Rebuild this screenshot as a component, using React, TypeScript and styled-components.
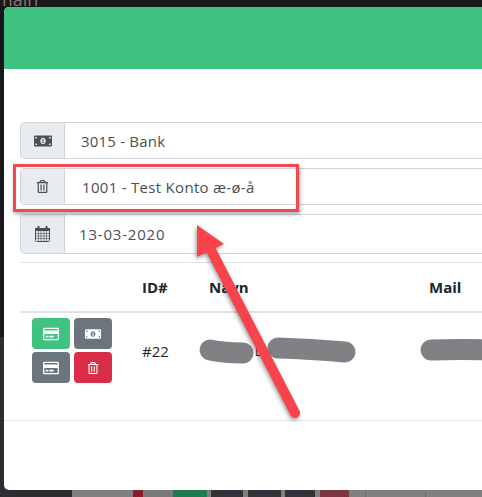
import React, { FC, ReactNode } from "react";
import styled, { createGlobalStyle } from "styled-components";
import { FaMoneyBillAlt, FaRegCreditCard, FaRegTrashAlt } from "react-icons/fa";

const GlobalStyle = createGlobalStyle`
    html, body {
        margin: 0;
        padding: 0;
        background: #17181c;
    }
`;

const Page = styled.div`
    position: relative;
    width: 482px;
    height: 497px;
    overflow: hidden;
    display: flex;
    flex-direction: column;
    font-family: "Open Sans", "Noto Sans", sans-serif;
    background: linear-gradient(#17181c 337px, #2a2e33 337px);
`;

const BackdropTitle = styled.div`
    height: 7px;
    flex: none;
    overflow: hidden;
    font-size: 18px;
    line-height: 18px;
    color: #8f7672;

    span {
        display: block;
        margin: -10px 0 0 -4px;
    }
`;

const Modal = styled.div`
    flex: none;
    width: 700px;
    height: 483px;
    margin-left: 4px;
    background: #fff;
    border-radius: 5px 0 0 5px;
    overflow: hidden;
`;

const ModalHeader = styled.div`
    height: 62px;
    background: #3fc380;
`;

const ModalBody = styled.div`
    height: 351px;
    padding: 53px 0 0 16px;
    box-sizing: border-box;
`;

const ModalFooter = styled.div`
    border-top: 1px solid #e4e7ea;
`;

const InputGroup = styled.div<{ $height: number }>`
    display: flex;
    height: ${p => p.$height}px;
    margin-bottom: 9px;
    margin-right: -1px;
    border: 1px solid #ced4da;
    border-radius: 4px 0 0 4px;
    box-sizing: border-box;
`;

const Addon = styled.div`
    width: 43px;
    flex: none;
    display: flex;
    align-items: center;
    justify-content: center;
    background: #e9ecef;
    border-right: 1px solid #ced4da;
    border-radius: 3px 0 0 3px;
    color: #495057;
`;

const InputText = styled.div<{ $indent: number; $spacing: number }>`
    display: flex;
    align-items: center;
    padding-left: ${p => p.$indent}px;
    font-size: 15px;
    color: #495057;
    letter-spacing: ${p => p.$spacing}px;
`;

const TableHead = styled.div`
    display: grid;
    grid-template-columns: 122px 67px 220px 1fr;
    align-items: center;
    height: 48px;
    margin-top: -1px;
    border-top: 1px solid #dee2e6;
    border-bottom: 2px solid #dee2e6;
    font-size: 15px;
    font-weight: 700;
    color: #212529;
`;

const TableRow = styled.div`
    display: grid;
    grid-template-columns: 122px 67px 220px 1fr;
    align-items: center;
    height: 75px;
    font-size: 15px;
    color: #212529;
`;

const ActionGrid = styled.div`
    display: grid;
    grid-template-columns: 38px 38px;
    grid-auto-rows: 31px;
    gap: 3px 4px;
    margin-left: 12px;
`;

const ActionButton = styled.button<{ $color: string }>`
    display: flex;
    align-items: center;
    justify-content: center;
    padding: 0;
    border: none;
    border-radius: 4px;
    background: ${p => p.$color};
    color: #fff;
`;

const NameCell = styled.div`
    padding: 1px 0 0 46px;
    font-size: 12px;
`;

const BackdropStrip = styled.div`
    flex: none;
    height: 7px;
    display: flex;
`;

const StripSegment = styled.div<{ $width: number; $color: string }>`
    flex: none;
    width: ${p => p.$width}px;
    background: ${p => p.$color};
`;

const Highlight = styled.div`
    position: absolute;
    left: 13px;
    top: 164px;
    width: 286px;
    height: 48px;
    box-sizing: border-box;
    border: 3px solid #ee4a50;
    box-shadow: 1px 2px 4px rgba(0, 0, 0, 0.35), inset 0 0 2px rgba(0, 0, 0, 0.15);
`;

const Annotations = styled.svg`
    position: absolute;
    left: 0;
    top: 0;
    pointer-events: none;
`;

const ArrowGroup = styled.g`
    filter: drop-shadow(-1px 2px 2px rgba(0, 0, 0, 0.4));
`;

const GREEN = "#3fc380";
const GREY = "#6c757d";
const RED = "#d92d48";

const strip: [number, string][] = [
    [72, "transparent"],
    [61, "#808080"],
    [10, "#8a1c2c"],
    [30, "#7a7a7a"],
    [34, "#1e7a50"],
    [4, "#808080"],
    [32, "#2e3439"],
    [5, "#808080"],
    [33, "#2e3439"],
    [4, "#808080"],
    [30, "#2e3439"],
    [5, "#808080"],
    [29, "#7a3540"],
    [16, "#808080"],
    [1, "#6a6a6a"],
    [59, "#808080"],
    [1, "#6a6a6a"],
    [56, "#808080"]
];

const CalendarIcon: FC = () => (
    <svg width={15} height={16} viewBox="0 0 15 16" fill="none" stroke="currentColor">
        <rect x={0.5} y={2.5} width={14} height={13} rx={1} />
        <rect x={0} y={2} width={15} height={3} fill="currentColor" stroke="none" />
        <path d="M3.5 0.5V3.5M11.5 0.5V3.5" strokeWidth={2} strokeLinecap="round" />
        <path d="M3.5 5V15M6 5V15M9 5V15M11.5 5V15M0 7.5H15M0 10H15M0 12.5H15" strokeWidth={0.6} />
    </svg>
);

const Field: FC<{ icon: ReactNode; height: number; indent: number; spacing: number; value: string }> = ({
    icon,
    height,
    indent,
    spacing,
    value
}) => (
    <InputGroup $height={height}>
        <Addon>{icon}</Addon>
        <InputText $indent={indent} $spacing={spacing}>
            {value}
        </InputText>
    </InputGroup>
);

export default function App() {
    return (
        <Page>
            <GlobalStyle />
            <BackdropTitle>
                <span>main</span>
            </BackdropTitle>
            <Modal>
                <ModalHeader />
                <ModalBody>
                    <Field icon={<FaMoneyBillAlt size={18} />} height={37} indent={16} spacing={0.2} value="3015 - Bank" />
                    <Field
                        icon={<FaRegTrashAlt size={13} />}
                        height={37}
                        indent={17}
                        spacing={0.3}
                        value="1001 - Test Konto æ-ø-å"
                    />
                    <Field icon={<CalendarIcon />} height={40} indent={14} spacing={0.8} value="13-03-2020" />
                    <TableHead>
                        <div />
                        <div>ID#</div>
                        <div>Navn</div>
                        <div>Mail</div>
                    </TableHead>
                    <TableRow>
                        <ActionGrid>
                            <ActionButton $color={GREEN}>
                                <FaRegCreditCard size={16} />
                            </ActionButton>
                            <ActionButton $color={GREY}>
                                <FaMoneyBillAlt size={16} />
                            </ActionButton>
                            <ActionButton $color={GREY}>
                                <FaRegCreditCard size={16} />
                            </ActionButton>
                            <ActionButton $color={RED}>
                                <FaRegTrashAlt size={12} />
                            </ActionButton>
                        </ActionGrid>
                        <div>#22</div>
                        <NameCell>L</NameCell>
                        <div />
                    </TableRow>
                </ModalBody>
                <ModalFooter />
            </Modal>
            <BackdropStrip>
                {strip.map(([width, color], i) => (
                    <StripSegment key={i} $width={width} $color={color} />
                ))}
            </BackdropStrip>

            <Highlight />
            <Annotations width={482} height={497} viewBox="0 0 482 497">
                <g stroke="#808184" strokeWidth={21} strokeLinecap="round" fill="none">
                    <path d="M210 350 Q225 353 243 353" />
                    <path d="M278 348 Q310 349 345 352" />
                    <path d="M431 350 Q460 349 495 350" />
                </g>
                <ArrowGroup>
                    <path d="M210 248 L295 413" stroke="#f8434a" strokeWidth={10} strokeLinecap="round" fill="none" />
                    <polygon points="197,225 224,244 197,257" fill="#f8434a" />
                </ArrowGroup>
            </Annotations>
        </Page>
    );
}
